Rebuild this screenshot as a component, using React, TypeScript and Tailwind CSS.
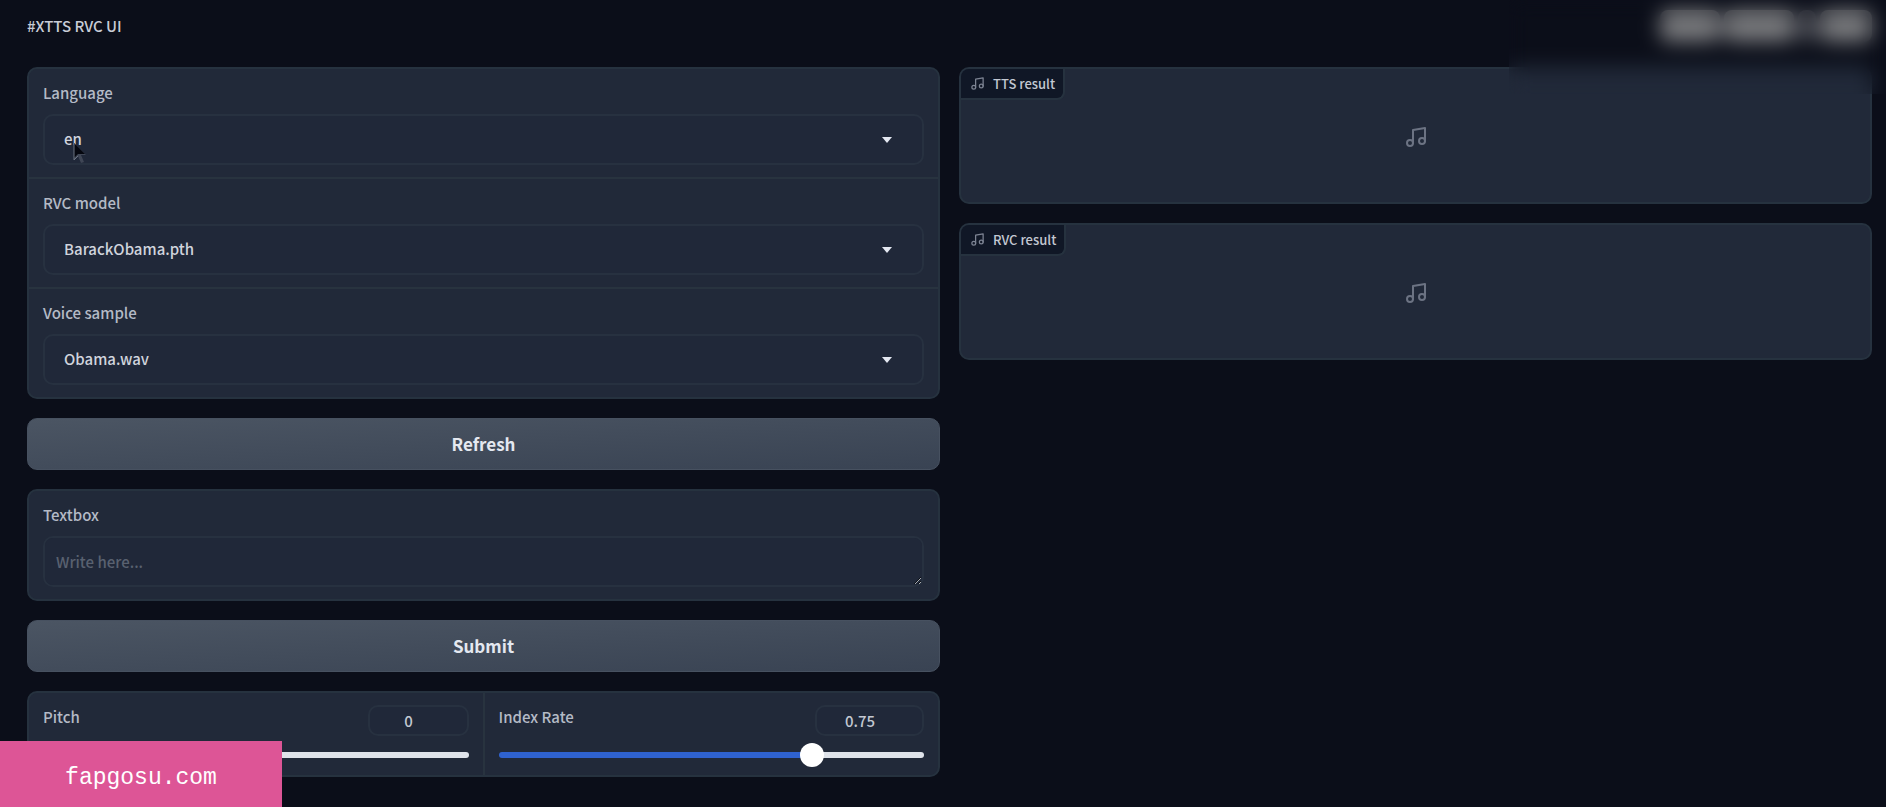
import { useState } from "react";
import type { ReactNode } from "react";

const voices = {
  languages: ["en", "es", "fr", "de"],
  models: ["BarackObama.pth"],
  samples: ["Obama.wav"],
};

function MusicIcon({ className }: { className: string }) {
  return (
    <svg
      viewBox="0 0 24 24"
      fill="none"
      stroke="currentColor"
      strokeWidth="2"
      strokeLinecap="round"
      strokeLinejoin="round"
      className={className}
      aria-hidden
    >
      <path d="M9 18V5l12-2v13" />
      <circle cx="6" cy="18" r="3" />
      <circle cx="18" cy="16" r="3" />
    </svg>
  );
}

function Pointer() {
  return (
    <svg
      viewBox="0 0 14 22"
      className="pointer-events-none absolute top-7 left-[30px] h-[22px] w-[14px]"
      aria-hidden
    >
      <path d="M1 1v17l4-4 3 7 3-1-3-7h5z" fill="#3f4655" />
      <path d="M1 1v15l4-4h7z" fill="#05070f" />
      <path d="M1 1v17l4-4" fill="none" stroke="#6b7280" strokeWidth="1" />
    </svg>
  );
}

function Panel({ children }: { children: ReactNode }) {
  return (
    <div className="overflow-hidden rounded-[10px] border-2 border-[#26323f] bg-[#212939]">
      {children}
    </div>
  );
}

type DropdownProps = {
  id: string;
  label: string;
  options: string[];
  children?: ReactNode;
};

function Dropdown({ id, label, options, children }: DropdownProps) {
  return (
    <div className="px-[14px] py-3">
      <label htmlFor={id} className="block text-[15px] leading-6 text-[#b4bac6]">
        {label}
      </label>
      <div className="relative mt-[9px]">
        <select
          id={id}
          className="block h-[51px] w-full appearance-none rounded-[10px] border-2 border-[#273140] bg-[#202839] px-[19px] text-[15px] text-[#d0d4dd] outline-none"
        >
          {options.map((option) => (
            <option key={option}>{option}</option>
          ))}
        </select>
        <svg
          viewBox="0 0 10 6"
          className="pointer-events-none absolute top-[23px] right-8 h-[6px] w-[10px]"
          aria-hidden
        >
          <path d="M0 0h10L5 6z" fill="#e5e9f2" />
        </svg>
        {children}
      </div>
    </div>
  );
}

function ActionButton({ children }: { children: ReactNode }) {
  return (
    <button
      type="button"
      className="h-[52px] w-full rounded-[10px] border border-[#475160] bg-linear-to-br from-[#4b5563] to-[#394353] text-[17px] font-bold text-[#e4e8f0]"
    >
      {children}
    </button>
  );
}

type SliderProps = {
  id: string;
  label: string;
  min: number;
  max: number;
  step: number;
  initial: number;
  boxWidth: string;
};

function SliderField({ id, label, min, max, step, initial, boxWidth }: SliderProps) {
  const [value, setValue] = useState(initial);
  const filled = ((value - min) / (max - min)) * 100;

  return (
    <div className="min-w-0 flex-1 px-[14px] pt-3 pb-[6px]">
      <div className="flex items-start justify-between">
        <label htmlFor={id} className="text-[15px] leading-6 text-[#b4bac6]">
          {label}
        </label>
        <input
          type="number"
          aria-label={`${label} value`}
          min={min}
          max={max}
          step={step}
          value={value}
          onChange={(e) => setValue(Number(e.target.value))}
          className={`${boxWidth} h-[31px] rounded-[10px] border-2 border-[#273140] bg-[#202839] pr-1 text-center text-[15px] text-[#c3c8d2] outline-none`}
        />
      </div>
      <input
        id={id}
        type="range"
        min={min}
        max={max}
        step={step}
        value={value}
        onChange={(e) => setValue(Number(e.target.value))}
        style={{
          backgroundImage: `linear-gradient(to right, #2f62cf ${filled}%, #dfe3ea ${filled}%)`,
        }}
        className="mt-4 mb-[11px] block h-[6px] w-full appearance-none rounded-full [&::-webkit-slider-thumb]:size-6 [&::-webkit-slider-thumb]:appearance-none [&::-webkit-slider-thumb]:rounded-full [&::-webkit-slider-thumb]:bg-white"
      />
    </div>
  );
}

function AudioResult({ label }: { label: string }) {
  return (
    <section
      aria-label={label}
      className="relative flex h-[137px] items-center justify-center rounded-[10px] border-2 border-[#26323f] bg-[#212939] pt-[3px]"
    >
      <h2 className="absolute top-0 left-0 flex h-[31px] items-center gap-2 rounded-tl-lg rounded-br-lg border-r-2 border-b-2 border-[#26323f] bg-[#101726] pr-2 pl-[9px] text-[13px] font-medium text-[#c3c8d2]">
        <MusicIcon className="size-[15px] text-[#7d8493]" />
        {label}
      </h2>
      <MusicIcon className="size-6 text-[#6c7383]" />
    </section>
  );
}

export default function App() {
  return (
    <div className="relative min-h-screen overflow-hidden bg-[#0b0e19] pr-[14px] pl-[27px] font-['Noto_Sans_CJK_JP','Noto_Sans',sans-serif] font-medium">
      <header className="flex h-[67px] items-start justify-between pt-[10px]">
        <h1 className="text-[15px] leading-8 text-[#c8ccd6]">#XTTS RVC UI</h1>
        <div className="flex gap-1" aria-hidden>
          <span className="h-8 w-[60px] rounded-lg bg-[#77787b]" />
          <span className="h-8 w-[70px] rounded-lg bg-[#77787b]" />
          <span className="h-8 w-[18px] rounded-lg bg-[#4b4d55]" />
          <span className="h-8 w-[52px] rounded-lg bg-[#77787b]" />
        </div>
      </header>

      <main className="grid grid-cols-2 items-start gap-[19px]">
        <form className="flex flex-col gap-[19px]">
          <Panel>
            <div className="divide-y-2 divide-[#28333f]">
              <Dropdown id="language" label="Language" options={voices.languages}>
                <Pointer />
              </Dropdown>
              <Dropdown id="model" label="RVC model" options={voices.models} />
              <Dropdown id="sample" label="Voice sample" options={voices.samples} />
            </div>
          </Panel>

          <ActionButton>Refresh</ActionButton>

          <Panel>
            <div className="px-[14px] py-3">
              <label htmlFor="prompt" className="block text-[15px] leading-6 text-[#b4bac6]">
                Textbox
              </label>
              <textarea
                id="prompt"
                rows={1}
                placeholder="Write here..."
                className="mt-[9px] block h-[51px] w-full rounded-[10px] border-2 border-[#273140] bg-[#202839] px-[11px] py-3 text-[15px] leading-6 text-[#d0d4dd] scheme-dark outline-none placeholder:text-[#596170]"
              />
            </div>
          </Panel>

          <ActionButton>Submit</ActionButton>

          <Panel>
            <div className="flex divide-x-2 divide-[#28333f]">
              <SliderField
                id="pitch"
                label="Pitch"
                min={-24}
                max={24}
                step={1}
                initial={0}
                boxWidth="w-[101px]"
              />
              <SliderField
                id="index-rate"
                label="Index Rate"
                min={0}
                max={1}
                step={0.01}
                initial={0.75}
                boxWidth="w-[109px]"
              />
            </div>
          </Panel>
        </form>

        <div className="flex flex-col gap-[19px]">
          <AudioResult label="TTS result" />
          <AudioResult label="RVC result" />
        </div>
      </main>

      {/* privacy patch over the account area */}
      <div className="pointer-events-none absolute top-0 right-0 h-[94px] w-[377px] backdrop-blur-[10px]" />

      <a
        href="#"
        className="absolute bottom-0 left-0 flex h-[66px] w-[282px] items-center justify-center bg-[#dd5596] pt-2 font-['Liberation_Mono',monospace] text-[23px] font-normal text-white"
      >
        fapgosu.com
      </a>
    </div>
  );
}
